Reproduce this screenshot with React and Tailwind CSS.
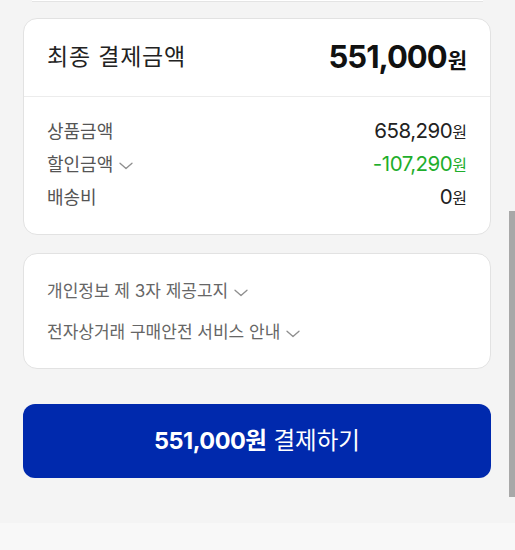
const ROWS = [
  { label: "상품금액", value: "658,290", color: "text-[#222]" },
  { label: "할인금액", value: "-107,290", color: "text-[#1fae2c]", toggle: true },
  { label: "배송비", value: "0", color: "text-[#222]" },
];

const NOTICES = ["개인정보 제 3자 제공고지", "전자상거래 구매안전 서비스 안내"];

function Chevron() {
  return (
    <svg width="14" height="8" viewBox="0 0 14 8" fill="none" className="ml-[6px] mt-[3px] text-[#8f8f8f]">
      <path d="M1 1.2 L7 6.6 L13 1.2" stroke="currentColor" strokeWidth="1.3" strokeLinecap="round" strokeLinejoin="round" />
    </svg>
  );
}

export default function App() {
  return (
    <div
      className="relative w-[515px] h-[550px] overflow-hidden bg-[#f4f4f4]"
      style={{ fontFamily: 'Inter, "Noto Sans CJK KR", sans-serif' }}
    >
      {/* bottom edge of the previous card */}
      <div className="mx-[32px] h-[2px] bg-white border-b border-[#e4e4e4]" />

      <div className="pl-[23px] pr-[24px] pt-[16px] flex flex-col">
        {/* final amount */}
        <div className="bg-white rounded-[14px] border border-[#e2e2e2]">
          <div className="h-[78px] px-[23px] flex items-center justify-between border-b border-[#ececec]">
            <span className="text-[23px] tracking-[0.8px] text-[#222]">최종 결제금액</span>
            <span className="flex items-baseline text-[#111] font-bold">
              <span className="text-[31px] tracking-[-1px]">551,000</span>
              <span className="text-[21px] ml-[1px]">원</span>
            </span>
          </div>
          <div className="px-[23px] pt-[18px] pb-[20px] flex flex-col">
            {ROWS.map((r) => (
              <div key={r.label} className="h-[33px] flex items-center justify-between">
                <span className="flex items-center text-[18px] text-[#555]">
                  {r.label}
                  {r.toggle && <Chevron />}
                </span>
                <span className={`flex items-baseline ${r.color}`}>
                  <span className="text-[20.5px] tracking-[-0.5px]">{r.value}</span>
                  <span className="text-[16px]">원</span>
                </span>
              </div>
            ))}
          </div>
        </div>

        {/* notices */}
        <div className="mt-[18px] bg-white rounded-[14px] border border-[#e2e2e2] px-[23px] pt-[25px] pb-[23px] flex flex-col gap-[16px]">
          {NOTICES.map((n) => (
            <div key={n} className="h-[25px] flex items-center text-[17px] text-[#666]">
              {n}
              <Chevron />
            </div>
          ))}
        </div>

        {/* pay button */}
        <button className="mt-[35px] h-[74px] rounded-[12px] bg-[#0029ad] text-white flex items-center justify-center gap-[7px]">
          <span className="text-[23.5px] font-bold tracking-[-0.5px]">551,000원</span>
          <span className="text-[23.5px]">결제하기</span>
        </button>
      </div>

      <div className="absolute left-0 right-0 bottom-0 h-[27px] bg-[#f8f8f8]" />
      {/* scrollbar thumb */}
      <div className="absolute right-0 top-[211px] w-[6px] h-[286px] bg-[#a8a8a8]" />
    </div>
  );
}
